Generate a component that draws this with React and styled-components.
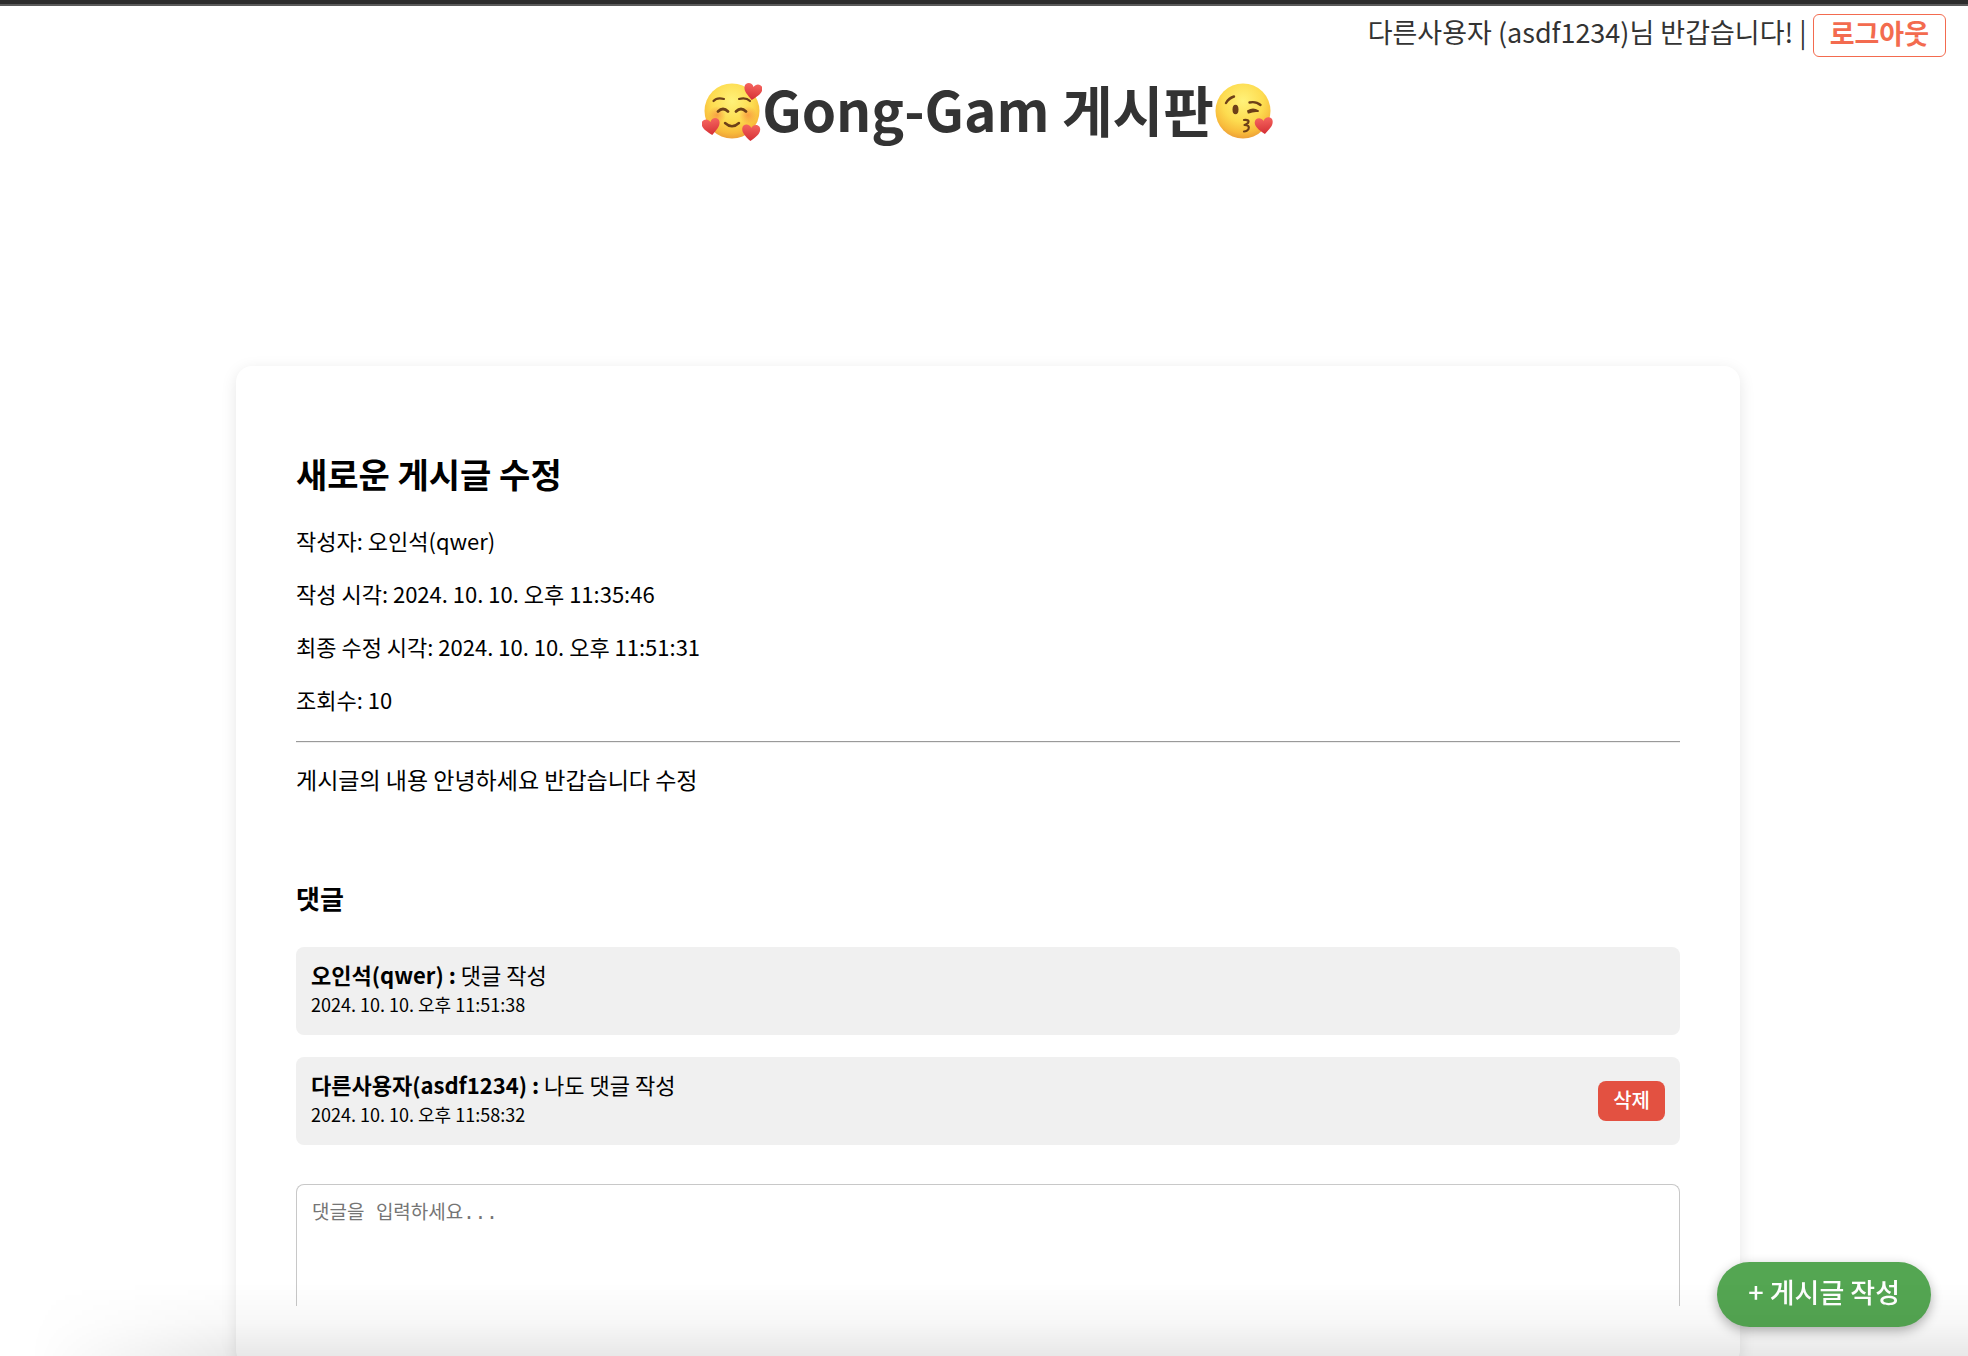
import React from "react";
import styled, { createGlobalStyle } from "styled-components";

const GlobalStyle = createGlobalStyle`
  * { box-sizing: border-box; }
  body {
    margin: 0;
    background: #fff;
    color: #000;
    font-family: "Noto Sans CJK KR", sans-serif;
    font-size: 22px;
    line-height: 30px;
  }
`;

const Page = styled.div`
  height: 100vh;
  overflow: hidden;
  padding-left: 8px;
  border-top: 4px solid #2c2c2c;
  box-shadow: inset 0 2px #5a5a5a;
`;

const UserBar = styled.div`
  display: flex;
  justify-content: flex-end;
  align-items: flex-start;
  gap: 6px;
  padding: 10px 22px 0 0;
  font-size: 27px;
  line-height: 36px;
  color: #333;
`;

const LogoutButton = styled.button`
  height: 43px;
  padding: 0 16px 6px;
  border: 1px solid #f36b4f;
  border-radius: 6px;
  background: #fff;
  color: #f36b4f;
  font: inherit;
  font-weight: 700;
  cursor: pointer;
`;

const Title = styled.h1`
  display: flex;
  justify-content: center;
  align-items: center;
  margin: 16px 0 0;
  font-size: 55px;
  line-height: 70px;
  font-weight: 700;
  color: #333;
`;

const Emoji = styled.svg`
  width: 60px;
  height: 60px;
  margin-top: 6px;
  flex: none;
`;

const Card = styled.main`
  margin: 223px 228px 0;
  padding: 88px 60px 60px;
  border-radius: 16px;
  background: #fff;
  box-shadow: 0 4px 16px rgba(0, 0, 0, 0.1);
`;

const PostTitle = styled.h2`
  margin: 0 0 20px;
  font-size: 34px;
  line-height: 40px;
`;

const MetaLine = styled.p`
  margin: 0;
  padding: 11px 0 12px;
`;

const PostBody = styled.p`
  margin: 0;
  padding: 11px 0 12px;
  font-size: 23px;
`;

const Divider = styled.hr`
  margin: 15px 0 10px;
  border: 0;
  border-top: 1px solid #9a9a9a;
  border-bottom: 1px solid #eee;
`;

const SectionTitle = styled.h3`
  margin: 75px 0 32px;
  font-size: 26px;
  line-height: 34px;
`;

const CommentList = styled.ul`
  display: grid;
  gap: 22px;
  margin: 0 0 39px;
  padding: 0;
  list-style: none;
`;

const Comment = styled.li`
  display: flex;
  justify-content: space-between;
  align-items: center;
  height: 88px;
  padding: 0 15px 4px;
  border-radius: 8px;
  background: #f0f0f0;
`;

const CommentTime = styled.time`
  display: block;
  font-size: 18px;
`;

const DeleteButton = styled.button`
  height: 40px;
  margin-top: 4px;
  padding: 0 15px 2px;
  border: 0;
  border-radius: 8px;
  background: #e35141;
  color: #fff;
  font: inherit;
  font-size: 20px;
  font-weight: 500;
  cursor: pointer;
`;

const CommentBox = styled.textarea`
  display: block;
  width: 100%;
  height: 122px;
  padding: 12px 15px;
  border: 1px solid #c8c8c8;
  border-bottom: 0;
  border-radius: 8px 8px 0 0;
  background: transparent;
  resize: none;
  font-family: "DejaVu Sans Mono", "Noto Sans CJK KR", monospace;
  font-size: 19px;
  line-height: 30px;
  &::placeholder { color: #757575; }
`;

const WriteButton = styled.button`
  position: fixed;
  right: 37px;
  bottom: 29px;
  height: 65px;
  padding: 0 31px 6px;
  border: 0;
  border-radius: 33px;
  background: #54a652;
  color: #fff;
  font: inherit;
  font-size: 27px;
  font-weight: 500;
  box-shadow: 0 4px 12px rgba(0, 0, 0, 0.3);
  cursor: pointer;
`;

const BottomShade = styled.div`
  position: fixed;
  inset: auto 0 0;
  height: 74px;
  pointer-events: none;
  background: linear-gradient(rgba(0, 0, 0, 0), rgba(0, 0, 0, 0.03) 55%, rgba(0, 0, 0, 0.09));
  mask-image: linear-gradient(to right, transparent 30px, #000 240px);
`;

const HEART = "M0 9C-6 4-9 1-9-3C-9-8-2-9 0-4C2-9 9-8 9-3C9 1 6 4 0 9Z";

function FaceDefs({ id }) {
  return (
    <defs>
      <radialGradient id={id} cx="0.5" cy="0.32" r="0.68">
        <stop offset="0" stopColor="#fff27a" />
        <stop offset="0.55" stopColor="#fddc50" />
        <stop offset="0.85" stopColor="#f8bb3b" />
        <stop offset="1" stopColor="#eda038" />
      </radialGradient>
      <linearGradient id={id + "-heart"} x1="0" y1="0" x2="0" y2="1">
        <stop offset="0" stopColor="#f5645e" />
        <stop offset="1" stopColor="#d52f35" />
      </linearGradient>
      <radialGradient id={id + "-blush"}>
        <stop offset="0" stopColor="#f5793a" stopOpacity="0.6" />
        <stop offset="1" stopColor="#f5793a" stopOpacity="0" />
      </radialGradient>
    </defs>
  );
}

function LovingFace() {
  return (
    <Emoji viewBox="0 0 60 60" role="img" aria-label="사랑스러운 얼굴">
      <FaceDefs id="loving" />
      <circle cx="30" cy="30" r="27.5" fill="url(#loving)" />
      <circle cx="15" cy="34" r="9" fill="url(#loving-blush)" />
      <circle cx="46" cy="34" r="9" fill="url(#loving-blush)" />
      <g fill="none" stroke="#6d4018" strokeWidth="2.2" strokeLinecap="round">
        <path d="M11.5 20Q15 16 22 18M37 18Q44 16 48 20" />
        <path d="M16 30.5Q21 25.5 26 30.5M34 30.5Q39 25.5 44 30.5" strokeWidth="2.8" />
        <path d="M23 42Q30 48.5 37 42" strokeWidth="2.4" />
      </g>
      <g fill="url(#loving-heart)">
        <path d={HEART} transform="translate(51 10) rotate(8)" />
        <path d={HEART} transform="translate(9 45) rotate(-8)" />
        <path d={HEART} transform="translate(49 51) rotate(4)" />
      </g>
    </Emoji>
  );
}

function KissingFace() {
  return (
    <Emoji viewBox="0 0 60 60" role="img" aria-label="키스를 보내는 얼굴">
      <FaceDefs id="kissing" />
      <circle cx="29" cy="30" r="27.5" fill="url(#kissing)" />
      <g fill="none" stroke="#6d4018" strokeLinecap="round" strokeLinejoin="round">
        <path d="M12 22Q15 17 20 15.5M35.5 21.5Q42 20 46.5 24" strokeWidth="2.4" />
        <path d="M34 30Q39 27 44 30Q39 29.5 34.5 31.5" strokeWidth="2" />
        <path d="M30 39Q36 38.5 34 42Q32.5 43.5 30.5 44Q36 44 34.5 48Q33 50.5 30 50.5" strokeWidth="2.2" />
      </g>
      <ellipse cx="21.5" cy="28.5" rx="3" ry="4.7" fill="#6d4018" />
      <path d={HEART} transform="translate(50 44) rotate(-6)" fill="url(#kissing-heart)" />
    </Emoji>
  );
}

const postLines = [
  "작성자: 오인석(qwer)",
  "작성 시각: 2024. 10. 10. 오후 11:35:46",
  "최종 수정 시각: 2024. 10. 10. 오후 11:51:31",
  "조회수: 10",
];

const comments = [
  { author: "오인석(qwer)", text: "댓글 작성", time: "2024. 10. 10. 오후 11:51:38", own: false },
  { author: "다른사용자(asdf1234)", text: "나도 댓글 작성", time: "2024. 10. 10. 오후 11:58:32", own: true },
];

export default function App() {
  return (
    <Page>
      <GlobalStyle />
      <header>
        <UserBar>
          <span>다른사용자 (asdf1234)님 반갑습니다! |</span>
          <LogoutButton type="button">로그아웃</LogoutButton>
        </UserBar>
        <Title>
          <LovingFace />
          Gong-Gam 게시판
          <KissingFace />
        </Title>
      </header>
      <Card>
        <PostTitle>새로운 게시글 수정</PostTitle>
        {postLines.map((line) => (
          <MetaLine key={line}>{line}</MetaLine>
        ))}
        <Divider />
        <PostBody>게시글의 내용 안녕하세요 반갑습니다 수정</PostBody>
        <SectionTitle>댓글</SectionTitle>
        <CommentList>
          {comments.map((c) => (
            <Comment key={c.time}>
              <div>
                <strong>{c.author} :</strong> {c.text}
                <CommentTime>{c.time}</CommentTime>
              </div>
              {c.own && <DeleteButton type="button">삭제</DeleteButton>}
            </Comment>
          ))}
        </CommentList>
        <CommentBox aria-label="댓글" placeholder="댓글을 입력하세요..." />
      </Card>
      <WriteButton type="button">+ 게시글 작성</WriteButton>
      <BottomShade />
    </Page>
  );
}
